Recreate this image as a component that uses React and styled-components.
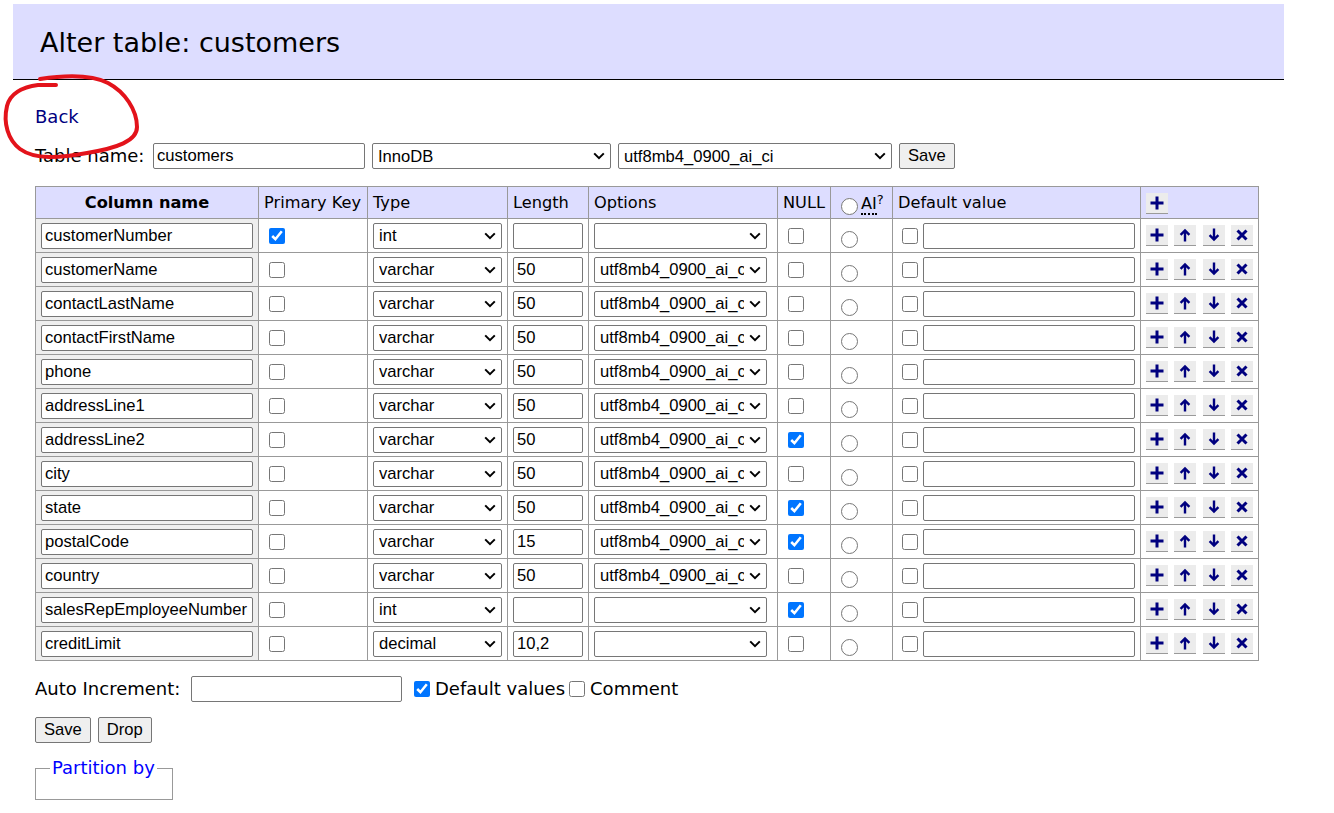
import React from "react";
import styled, { createGlobalStyle } from "styled-components";

const GlobalStyle = createGlobalStyle`
  body {
    margin: 0;
    background: #fff;
    color: #000;
    font-family: "DejaVu Sans", Verdana, sans-serif;
    font-size: 18px;
    line-height: 1.25;
  }
`;

const columns = [
  { name: "customerNumber", pk: true, type: "int", length: "", options: "", nul: false },
  { name: "customerName", type: "varchar", length: "50", options: "utf8mb4_0900_ai_ci" },
  { name: "contactLastName", type: "varchar", length: "50", options: "utf8mb4_0900_ai_ci" },
  { name: "contactFirstName", type: "varchar", length: "50", options: "utf8mb4_0900_ai_ci" },
  { name: "phone", type: "varchar", length: "50", options: "utf8mb4_0900_ai_ci" },
  { name: "addressLine1", type: "varchar", length: "50", options: "utf8mb4_0900_ai_ci" },
  { name: "addressLine2", type: "varchar", length: "50", options: "utf8mb4_0900_ai_ci", nul: true },
  { name: "city", type: "varchar", length: "50", options: "utf8mb4_0900_ai_ci" },
  { name: "state", type: "varchar", length: "50", options: "utf8mb4_0900_ai_ci", nul: true },
  { name: "postalCode", type: "varchar", length: "15", options: "utf8mb4_0900_ai_ci", nul: true },
  { name: "country", type: "varchar", length: "50", options: "utf8mb4_0900_ai_ci" },
  { name: "salesRepEmployeeNumber", type: "int", length: "", options: "", nul: true },
  { name: "creditLimit", type: "decimal", length: "10,2", options: "" },
];

const types = ["int", "varchar", "decimal", "date", "text"];

function PlusIcon() {
  return (
    <svg width="14" height="14" viewBox="0 0 14 14">
      <path d="M7 0.5v13M0.5 7h13" stroke="#00007f" strokeWidth="3" fill="none" />
    </svg>
  );
}

function UpIcon() {
  return (
    <svg width="14" height="14" viewBox="0 0 14 14">
      <path d="M7 13.5V2.5M2.6 6.8L7 2.4l4.4 4.4" stroke="#00007f" strokeWidth="2.4" fill="none" />
    </svg>
  );
}

function DownIcon() {
  return (
    <svg width="14" height="14" viewBox="0 0 14 14">
      <path d="M7 0.5v11M2.6 7.2L7 11.6l4.4-4.4" stroke="#00007f" strokeWidth="2.4" fill="none" />
    </svg>
  );
}

function CrossIcon() {
  return (
    <svg width="14" height="14" viewBox="0 0 14 14">
      <path d="M2.5 2.5l9 9M11.5 2.5l-9 9" stroke="#00007f" strokeWidth="3" fill="none" />
    </svg>
  );
}

function Chevron() {
  return (
    <Arrow width="12" height="8" viewBox="0 0 12 8">
      <path d="M1.2 1.4L6 6.2l4.8-4.8" stroke="#000" strokeWidth="2" fill="none" />
    </Arrow>
  );
}

function Dropdown({ w, value, children }) {
  return (
    <SelectWrap>
      <Select $w={w} defaultValue={value}>
        {children}
      </Select>
      <Chevron />
    </SelectWrap>
  );
}

function App() {
  return (
    <Page>
      <GlobalStyle />
      <Heading>Alter table: customers</Heading>
      <Content>
        <BackLine>
          <BackLink href="#">Back</BackLink>
        </BackLine>

        <FormRow>
          <Label $w={111}>Table name:</Label>
          <TextInput $w={212} defaultValue="customers" />
          <Dropdown w={239} value="InnoDB">
            <option>InnoDB</option>
            <option>MyISAM</option>
          </Dropdown>
          <Dropdown w={274} value="utf8mb4_0900_ai_ci">
            <option>utf8mb4_0900_ai_ci</option>
          </Dropdown>
          <Button>Save</Button>
        </FormRow>

        <Grid>
          <colgroup>
            <col style={{ width: 223 }} />
            <col style={{ width: 109 }} />
            <col style={{ width: 140 }} />
            <col style={{ width: 81 }} />
            <col style={{ width: 189 }} />
            <col style={{ width: 53 }} />
            <col style={{ width: 62 }} />
            <col style={{ width: 248 }} />
            <col style={{ width: 118 }} />
          </colgroup>
          <thead>
            <tr>
              <HeadTh>Column name</HeadTh>
              <HeadTd>Primary Key</HeadTd>
              <HeadTd>Type</HeadTd>
              <HeadTd>Length</HeadTd>
              <HeadTd>Options</HeadTd>
              <HeadTd>NULL</HeadTd>
              <HeadTd>
                <AiHead>
                  <HeadRadio type="radio" name="auto_increment" />
                  <Abbr title="Auto Increment">AI</Abbr>
                  <Sup>?</Sup>
                </AiHead>
              </HeadTd>
              <HeadTd>Default value</HeadTd>
              <HeadTd>
                <Actions>
                  <IconButton title="Add next"><PlusIcon /></IconButton>
                </Actions>
              </HeadTd>
            </tr>
          </thead>
          <tbody>
            {columns.map((c) => (
              <tr key={c.name}>
                <NameCell>
                  <TextInput $w={212} defaultValue={c.name} />
                </NameCell>
                <Cell>
                  <Check type="checkbox" defaultChecked={!!c.pk} />
                </Cell>
                <Cell>
                  <Dropdown w={129} value={c.type}>
                    {types.map((t) => (
                      <option key={t}>{t}</option>
                    ))}
                  </Dropdown>
                </Cell>
                <Cell>
                  <TextInput $w={70} defaultValue={c.length} />
                </Cell>
                <Cell>
                  <Dropdown w={173} value={c.options}>
                    <option value=""></option>
                    <option>utf8mb4_0900_ai_ci</option>
                  </Dropdown>
                </Cell>
                <Cell>
                  <Check type="checkbox" defaultChecked={!!c.nul} />
                </Cell>
                <Cell>
                  <Radio type="radio" name="auto_increment" />
                </Cell>
                <Cell>
                  <DefaultBox>
                    <SmallCheck type="checkbox" />
                    <TextInput $w={212} defaultValue="" />
                  </DefaultBox>
                </Cell>
                <Cell>
                  <Actions>
                    <IconButton title="Add next"><PlusIcon /></IconButton>
                    <IconButton title="Move up"><UpIcon /></IconButton>
                    <IconButton title="Move down"><DownIcon /></IconButton>
                    <IconButton title="Remove"><CrossIcon /></IconButton>
                  </Actions>
                </Cell>
              </tr>
            ))}
          </tbody>
        </Grid>

        <FooterRow>
          <Label $w={149}>Auto Increment:</Label>
          <TextInput $w={211} defaultValue="" />
          <CheckLabel $gap={12}>
            <InlineCheck type="checkbox" defaultChecked />
            Default values
          </CheckLabel>
          <CheckLabel $gap={4}>
            <InlineCheck type="checkbox" />
            Comment
          </CheckLabel>
        </FooterRow>

        <ButtonRow>
          <Button>Save</Button>
          <Button>Drop</Button>
        </ButtonRow>

        <Partition>
          <Legend>
            <PartitionLink href="#">Partition by</PartitionLink>
          </Legend>
        </Partition>
      </Content>

      <Scribble width="150" height="170" viewBox="0 0 150 170">
        <path
          d="M40 79 C60 76 90 74 108 83 C125 92 137 110 137 127 C137 141 117 148 87 153 C60 158 35 160 20 149 C8 140 3 123 7 106 C10 94 22 87 38 85 L56 85"
          stroke="#e3131b"
          strokeWidth="4"
          strokeLinecap="round"
          strokeLinejoin="round"
          fill="none"
        />
      </Scribble>
    </Page>
  );
}

export default App;

const Page = styled.div`
  position: relative;
  padding-top: 4px;
  padding-bottom: 20px;
`;

const Heading = styled.h2`
  box-sizing: border-box;
  margin: 0 0 0 13px;
  width: 1271px;
  height: 76px;
  padding: 2px 27px 0;
  display: flex;
  align-items: center;
  background: #ddf;
  border-bottom: 1px solid #000;
  font-size: 27px;
  font-weight: normal;
  color: #000;
`;

const Content = styled.div`
  padding-left: 35px;
`;

const BackLine = styled.p`
  margin: 26px 0 0;
  height: 22px;
  line-height: 22px;
`;

const BackLink = styled.a`
  color: #000080;
  text-decoration: none;
`;

const FormRow = styled.div`
  display: flex;
  align-items: center;
  gap: 7px;
  height: 28px;
  margin-top: 14px;
`;

const Label = styled.span`
  width: ${(p) => p.$w}px;
  white-space: nowrap;
`;

const fieldFont = `
  font-family: "Liberation Sans", Arial, sans-serif;
  font-size: 16.6px;
  color: #000;
`;

const TextInput = styled.input`
  box-sizing: border-box;
  width: ${(p) => p.$w}px;
  height: 26px;
  padding: 0 3px;
  border: 1px solid #767676;
  border-radius: 2px;
  background: #fff;
  ${fieldFont}
`;

const SelectWrap = styled.span`
  position: relative;
  display: inline-flex;
`;

const Select = styled.select`
  box-sizing: border-box;
  width: ${(p) => p.$w}px;
  height: 26px;
  padding: 0 22px 0 5px;
  border: 1px solid #767676;
  border-radius: 2px;
  background-color: #fff;
  appearance: none;
  -webkit-appearance: none;
  ${fieldFont}
`;

const Arrow = styled.svg`
  position: absolute;
  right: 6px;
  top: 9px;
  pointer-events: none;
`;

const Button = styled.button`
  box-sizing: border-box;
  height: 26px;
  padding: 0 8px;
  border: 1px solid #767676;
  border-radius: 2px;
  background: #efefef;
  ${fieldFont}
`;

const Grid = styled.table`
  margin-top: 16px;
  width: 1223px;
  table-layout: fixed;
  border-collapse: collapse;
  border: 1px solid #999;
  font-size: 16.2px;
`;

const HeadTh = styled.th`
  height: 29px;
  padding: 2px 5px 0;
  border: 1px solid #999;
  background: #ddf;
  text-align: center;
  font-weight: bold;
  white-space: nowrap;
`;

const HeadTd = styled.td`
  height: 29px;
  padding: 2px 5px 0;
  border: 1px solid #999;
  background: #ddf;
  white-space: nowrap;
  vertical-align: middle;
`;

const Cell = styled.td`
  height: 33px;
  padding: 0 5px;
  border: 1px solid #999;
  vertical-align: middle;
`;

const NameCell = styled(Cell)`
  background: #eee;
`;

const Check = styled.input`
  display: block;
  width: 16px;
  height: 16px;
  margin: 0 0 0 5px;
`;

const SmallCheck = styled.input`
  width: 16px;
  height: 16px;
  margin: 0 0 0 4px;
  flex: none;
`;

const Radio = styled.input`
  display: block;
  width: 17px;
  height: 17px;
  margin: 8px 0 0 5px;
`;

const AiHead = styled.span`
  display: flex;
  align-items: center;
`;

const HeadRadio = styled.input`
  width: 17px;
  height: 17px;
  margin: 5px 3px 0 5px;
`;

const Abbr = styled.abbr`
  text-decoration: none;
  border-bottom: 2px dotted #000;
  line-height: 18px;
  margin-top: 2px;
`;

const Sup = styled.sup`
  font-size: 13px;
  line-height: 1;
  align-self: flex-start;
  margin-top: 0;
`;

const DefaultBox = styled.div`
  display: flex;
  align-items: center;
  gap: 5px;
`;

const Actions = styled.div`
  display: flex;
  align-items: center;
  gap: 6.3px;
`;

const IconButton = styled.span`
  box-sizing: border-box;
  width: 22px;
  height: 21px;
  display: flex;
  align-items: center;
  justify-content: center;
  background: #ececec;
  border-bottom: 1px solid #9a9a9a;
`;

const FooterRow = styled.div`
  display: flex;
  align-items: center;
  gap: 7px;
  height: 28px;
  margin-top: 14px;
`;

const CheckLabel = styled.label`
  display: flex;
  align-items: center;
  gap: 5px;
  margin-left: ${(p) => p.$gap - 7}px;
  white-space: nowrap;
`;

const InlineCheck = styled.input`
  width: 16px;
  height: 16px;
  margin: 0;
`;

const ButtonRow = styled.div`
  display: flex;
  gap: 7px;
  margin-top: 14px;
`;

const Partition = styled.fieldset`
  display: block;
  box-sizing: border-box;
  width: 138px;
  margin: 14px 0 0;
  padding: 0 14px 20px;
  min-height: 0;
  border: 1px solid #999;
`;

const Legend = styled.legend`
  padding: 0 2px;
  line-height: 22px;
`;

const PartitionLink = styled.a`
  color: #00f;
  text-decoration: none;
`;

const Scribble = styled.svg`
  position: absolute;
  left: 0;
  top: 0;
  pointer-events: none;
`;
